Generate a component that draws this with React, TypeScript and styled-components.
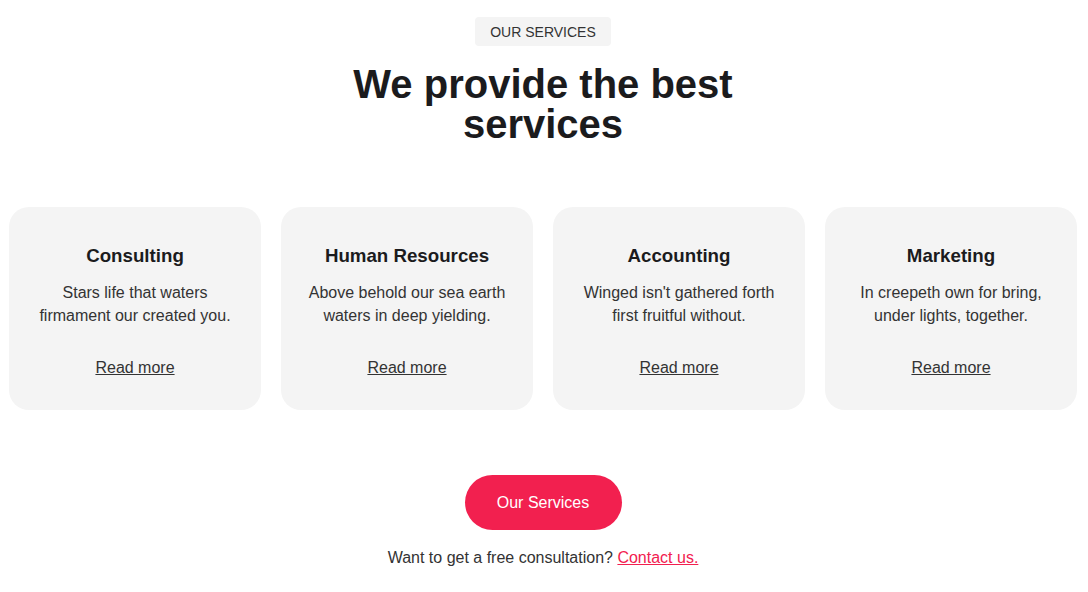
import React from "react";
import styled, { createGlobalStyle } from "styled-components";

const Global = createGlobalStyle`
  html, body { margin: 0; padding: 0; background: #fff; }
  body { font-family: "Liberation Sans", Arial, sans-serif; color: #333; }
`;

const Section = styled.section`
  display: flex;
  flex-direction: column;
  align-items: center;
  padding: 17px 11px 0 9px;
`;

const Badge = styled.span`
  display: inline-block;
  background: #f4f4f4;
  border-radius: 4px;
  padding: 0 15px;
  height: 29px;
  line-height: 31px;
  font-size: 14px;
  color: #333;
  text-transform: uppercase;
`;

const Heading = styled.h2`
  margin: 18px 0 0;
  max-width: 420px;
  text-align: center;
  font-size: 40px;
  line-height: 40px;
  font-weight: 700;
  color: #1b1b1d;
`;

const Grid = styled.div`
  margin-top: 63px;
  width: 1068px;
  display: grid;
  grid-template-columns: repeat(4, 1fr);
  gap: 20px;
`;

const Card = styled.div`
  background: #f4f4f4;
  border-radius: 20px;
  padding: 37px 24px 31px;
  display: flex;
  flex-direction: column;
  align-items: center;
  text-align: center;
`;

const CardTitle = styled.h3`
  margin: 0;
  font-size: 18.72px;
  line-height: 24px;
  font-weight: 700;
  color: #1b1b1d;
`;

const CardText = styled.p`
  margin: 13px 0 0;
  font-size: 16px;
  line-height: 23px;
  color: #333;
`;

const ReadMore = styled.a`
  margin-top: 29px;
  font-size: 16px;
  line-height: 23px;
  color: #333;
  text-decoration: underline;
  cursor: pointer;
`;

const Button = styled.button`
  margin-top: 65px;
  width: 157px;
  height: 55px;
  border: none;
  border-radius: 28px;
  background: #f2204f;
  color: #fff;
  font-family: inherit;
  font-size: 16px;
  cursor: pointer;
`;

const Note = styled.p`
  margin: 16px 0 0;
  font-size: 16px;
  line-height: 23px;
  color: #333;
`;

const Contact = styled.a`
  color: #f2204f;
  text-decoration: underline;
  cursor: pointer;
`;

const services = [
  { title: "Consulting", text: ["Stars life that waters", "firmament our created you."] },
  { title: "Human Resources", text: ["Above behold our sea earth", "waters in deep yielding."] },
  { title: "Accounting", text: ["Winged isn't gathered forth", "first fruitful without."] },
  { title: "Marketing", text: ["In creepeth own for bring,", "under lights, together."] },
];

export default function App() {
  return (
    <>
      <Global />
      <Section>
        <Badge>Our Services</Badge>
        <Heading>We provide the best services</Heading>
        <Grid>
          {services.map((s) => (
            <Card key={s.title}>
              <CardTitle>{s.title}</CardTitle>
              <CardText>
                {s.text[0]}
                <br />
                {s.text[1]}
              </CardText>
              <ReadMore>Read more</ReadMore>
            </Card>
          ))}
        </Grid>
        <Button>Our Services</Button>
        <Note>
          Want to get a free consultation? <Contact>Contact us.</Contact>
        </Note>
      </Section>
    </>
  );
}
